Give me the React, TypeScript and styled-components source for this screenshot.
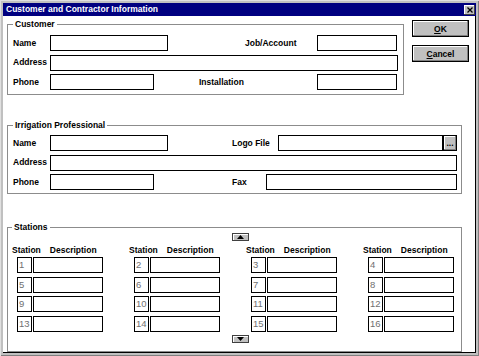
import React from "react";
import styled, { createGlobalStyle } from "styled-components";

const Global = createGlobalStyle`
  html, body { margin: 0; padding: 0; background: #c0c0c0; }
  body { font-family: "Liberation Sans", Arial, sans-serif; }
  * { box-sizing: border-box; }
`;

const Window = styled.div`
  width: 479px;
  height: 356px;
  background: #c0c0c0;
  padding: 3px;
  display: flex;
  flex-direction: column;
  box-shadow: inset 1px 1px #e0e0e0, inset -1px -1px #808080;
`;

const TitleBar = styled.div`
  height: 13px;
  flex: none;
  background: #000080;
  color: #fff;
  display: flex;
  align-items: center;
  justify-content: space-between;
  padding: 0 1px 0 3px;
  font-weight: bold;
  font-size: 8.5px;
  line-height: 11px;
  white-space: nowrap;
`;

const CloseBox = styled.div`
  width: 11px;
  height: 10px;
  background: #c0c0c0;
  box-shadow: inset -1px -1px #404040, inset 1px 1px #fff;
  display: flex;
  align-items: center;
  justify-content: center;
`;

const Client = styled.div`
  flex: 1;
  background: #fff;
  border-right: 1px solid #000;
  border-bottom: 1px solid #000;
  padding: 3px 0 0 4px;
  display: flex;
  flex-direction: column;
`;

const TopRow = styled.div`
  display: flex;
  align-items: flex-start;
`;

const Group = styled.fieldset<{ $w: number; $h: number; $pt: number; $pl: number; $pr: number; $mt?: number }>`
  margin: ${(p) => p.$mt ?? 0}px 0 0 0;
  width: ${(p) => p.$w}px;
  height: ${(p) => p.$h}px;
  min-width: 0;
  border: 1px solid #8c8c8c;
  padding: ${(p) => p.$pt}px ${(p) => p.$pr}px 0 ${(p) => p.$pl}px;
  flex: none;
`;

const Legend = styled.legend`
  padding: 0 2px;
  font-weight: bold;
  font-size: 8.5px;
  line-height: 11px;
  color: #000;
`;

const Rows = styled.div<{ $gap: number }>`
  display: flex;
  flex-direction: column;
  gap: ${(p) => p.$gap}px;
`;

const Row = styled.div`
  display: flex;
  align-items: center;
  height: 16px;
`;

const Label = styled.span<{ $w: number; $ml?: number }>`
  flex: none;
  width: ${(p) => p.$w}px;
  margin-left: ${(p) => p.$ml ?? 0}px;
  font-weight: bold;
  font-size: 8.5px;
  line-height: 11px;
  color: #000;
  white-space: nowrap;
`;

const TextBox = styled.input<{ $w?: number }>`
  appearance: none;
  height: 16px;
  margin: 0;
  padding: 0 2px;
  border: 1px solid #000;
  border-radius: 0;
  background: #fff;
  font: 8.5px "Liberation Sans", Arial, sans-serif;
  outline: none;
  ${(p) => (p.$w ? `width: ${p.$w}px; flex: none;` : `flex: 1; min-width: 0;`)}
`;

const WinButton = styled.button<{ $w: number; $h: number }>`
  width: ${(p) => p.$w}px;
  height: ${(p) => p.$h}px;
  margin: 0;
  padding: 0;
  flex: none;
  background: #c0c0c0;
  border: 1px solid #000;
  border-radius: 0;
  box-shadow: inset -1px -1px #808080, inset 1px 1px #fff;
  font-family: "Liberation Sans", Arial, sans-serif;
  font-weight: bold;
  font-size: 8.5px;
  line-height: 10px;
  color: #000;
  display: flex;
  align-items: center;
  justify-content: center;
`;

const ButtonColumn = styled.div`
  display: flex;
  flex-direction: column;
  gap: 8px;
  margin: 1px 0 0 8px;
`;

const Hot = styled.span`
  text-decoration: underline;
`;

const StationsBody = styled.div`
  display: flex;
  flex-direction: column;
`;

const ArrowButton = styled.button<{ $mt: number }>`
  width: 17px;
  height: 8px;
  margin: ${(p) => p.$mt}px 0 0 220px;
  padding: 0;
  background: #c0c0c0;
  border: 1px solid #404040;
  border-radius: 0;
  box-shadow: inset 1px 1px #fff;
  display: flex;
  align-items: center;
  justify-content: center;
`;

const StationGrid = styled.div<{ $mt: number; $gap: number }>`
  display: grid;
  grid-template-columns: repeat(4, 117px);
  row-gap: ${(p) => p.$gap}px;
  margin-top: ${(p) => p.$mt}px;
`;

const HeadCell = styled.div`
  display: flex;
  gap: 9px;
  font-weight: bold;
  font-size: 8.5px;
  line-height: 11px;
  white-space: nowrap;
`;

const StationCell = styled.div`
  display: flex;
  align-items: center;
  padding-left: 5px;
  height: 16px;
`;

const NumBox = styled.div`
  width: 15px;
  height: 16px;
  border: 1px solid #000;
  color: #707070;
  font-size: 9.5px;
  line-height: 14px;
  padding-left: 1px;
  margin-right: 1px;
  flex: none;
`;

const Up = () => (
  <svg width="7" height="4" viewBox="0 0 7 4">
    <path d="M3.5 0 L7 4 L0 4 Z" fill="#000" />
  </svg>
);
const Down = () => (
  <svg width="7" height="4" viewBox="0 0 7 4">
    <path d="M0 0 L7 0 L3.5 4 Z" fill="#000" />
  </svg>
);

export default function App() {
  const cols = [0, 1, 2, 3];
  const rows = [0, 1, 2, 3];
  return (
    <>
      <Global />
      <Window>
        <TitleBar>
          <span>Customer and Contractor Information</span>
          <CloseBox>
            <svg width="6" height="6" viewBox="0 0 6 6">
              <path d="M0.5 0.5 L5.5 5.5 M5.5 0.5 L0.5 5.5" stroke="#000" strokeWidth="1.3" />
            </svg>
          </CloseBox>
        </TitleBar>
        <Client>
          <TopRow>
            <Group $w={397} $h={76} $pt={5} $pl={5} $pr={5}>
              <Legend>Customer</Legend>
              <Rows $gap={3.5}>
                <Row>
                  <Label $w={37}>Name</Label>
                  <TextBox $w={118} />
                  <Label $w={72} $ml={77}>Job/Account</Label>
                  <TextBox $w={80} />
                </Row>
                <Row>
                  <Label $w={37}>Address</Label>
                  <TextBox />
                </Row>
                <Row>
                  <Label $w={37}>Phone</Label>
                  <TextBox $w={104} />
                  <Label $w={118} $ml={45}>Installation</Label>
                  <TextBox $w={80} />
                </Row>
              </Rows>
            </Group>
            <ButtonColumn>
              <WinButton $w={57} $h={17}>
                <Hot>O</Hot>K
              </WinButton>
              <WinButton $w={57} $h={17}>
                <Hot>C</Hot>ancel
              </WinButton>
            </ButtonColumn>
          </TopRow>

          <Group $w={455} $h={74} $pt={4} $pl={5} $pr={4} $mt={25}>
            <Legend>Irrigation Professional</Legend>
            <Rows $gap={3.5}>
              <Row>
                <Label $w={37}>Name</Label>
                <TextBox $w={118} />
                <Label $w={46} $ml={64}>Logo File</Label>
                <TextBox />
                <WinButton $w={14} $h={16}>...</WinButton>
              </Row>
              <Row>
                <Label $w={37}>Address</Label>
                <TextBox />
              </Row>
              <Row>
                <Label $w={37}>Phone</Label>
                <TextBox $w={104} />
                <Label $w={34} $ml={78}>Fax</Label>
                <TextBox />
              </Row>
            </Rows>
          </Group>

          <Group $w={455} $h={130} $pt={0} $pl={4} $pr={4} $mt={28}>
            <Legend>Stations</Legend>
            <StationsBody>
              <ArrowButton $mt={0}>
                <Up />
              </ArrowButton>
              <StationGrid $mt={4} $gap={0}>
                {cols.map((c) => (
                  <HeadCell key={c}>
                    <span>Station</span>
                    <span>Description</span>
                  </HeadCell>
                ))}
              </StationGrid>
              <StationGrid $mt={1} $gap={3.5}>
                {rows.map((r) =>
                  cols.map((c) => (
                    <StationCell key={`${r}-${c}`}>
                      <NumBox>{r * 4 + c + 1}</NumBox>
                      <TextBox $w={70} />
                    </StationCell>
                  ))
                )}
              </StationGrid>
              <ArrowButton $mt={3.5}>
                <Down />
              </ArrowButton>
            </StationsBody>
          </Group>
        </Client>
      </Window>
    </>
  );
}
